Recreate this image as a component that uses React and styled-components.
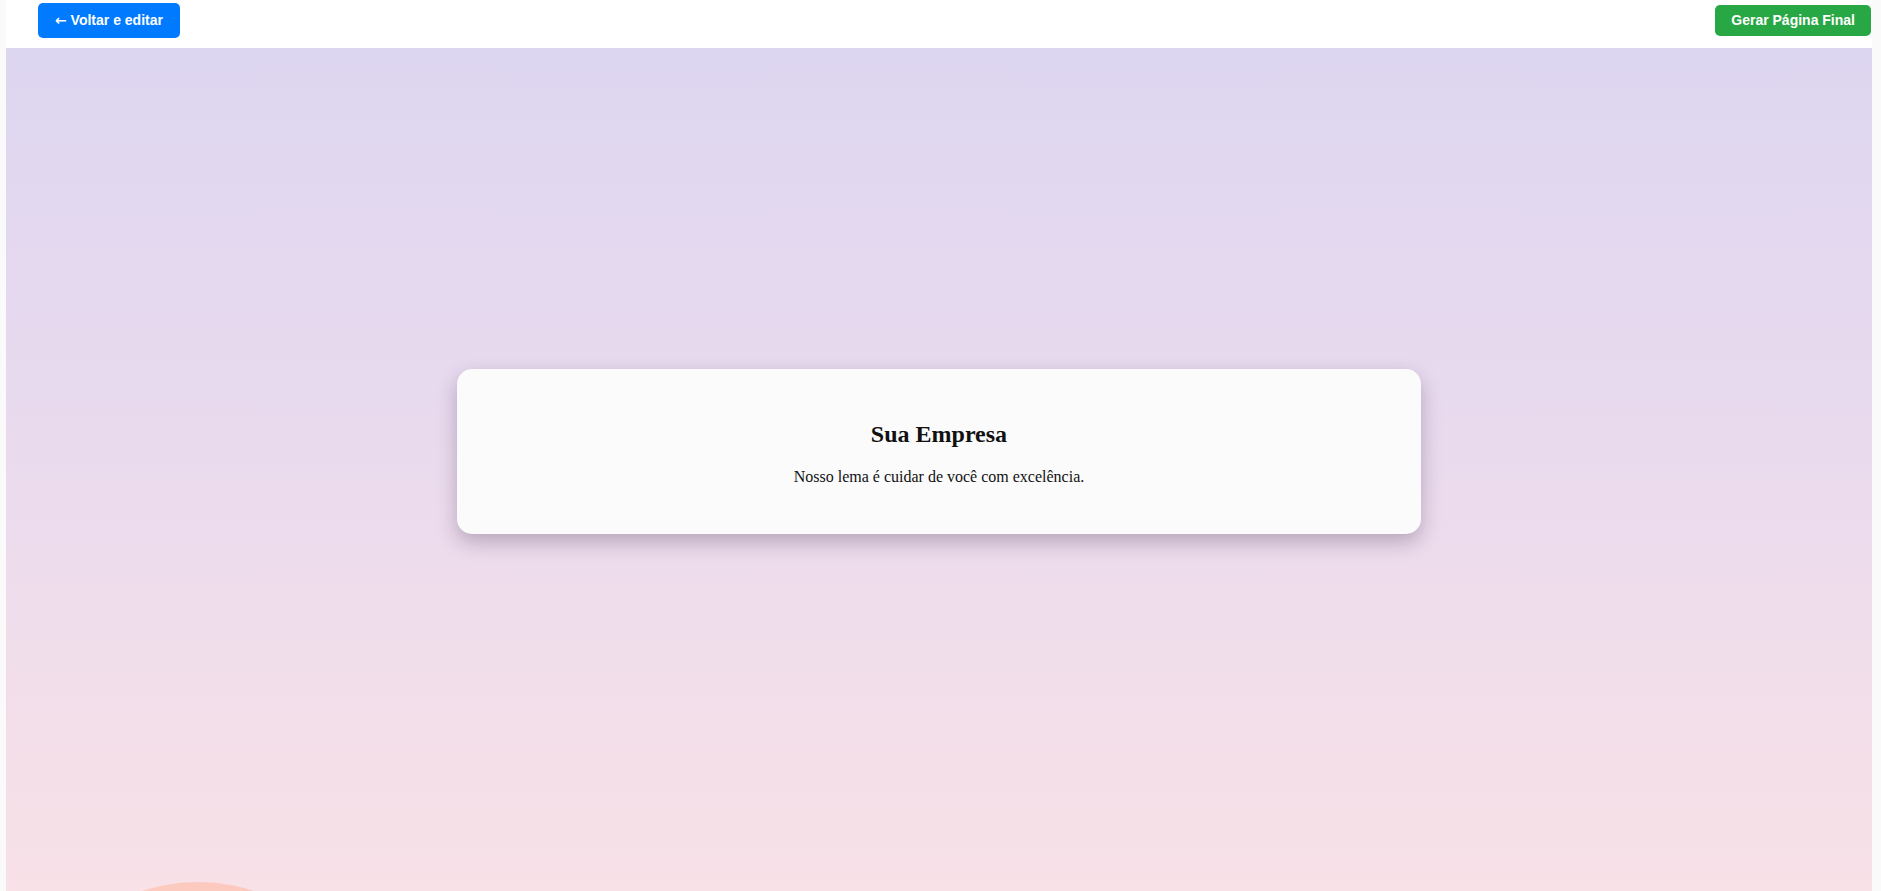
import React from 'react';
import styled, { createGlobalStyle } from 'styled-components';

const GlobalStyle = createGlobalStyle`
  html, body {
    margin: 0;
    padding: 0;
    background: #fafafa;
    overflow: hidden;
  }
`;

const Page = styled.div`
  display: flex;
  flex-direction: column;
  height: 100vh;
  padding: 0 9px 0 6px;
`;

const TopBar = styled.div`
  display: flex;
  justify-content: space-between;
  align-items: flex-start;
  height: 48px;
  background: #ffffff;
  padding: 0 1px 0 32px;
  box-sizing: border-box;
`;

const Button = styled.button`
  border: none;
  border-radius: 5px;
  color: #ffffff;
  font-family: "Liberation Sans", Arial, sans-serif;
  font-size: 14px;
  font-weight: bold;
  line-height: 15px;
  cursor: pointer;
  background: ${(props) => props.color};
  margin-top: ${(props) => props.top}px;
  padding: ${(props) => props.pad};
`;

const Arrow = styled.span`
  font-family: "DejaVu Sans", sans-serif;
  font-weight: bold;
`;

const Preview = styled.div`
  position: relative;
  flex: 1;
  overflow: hidden;
  background: linear-gradient(180deg, #ddd6f0 0%, #e9daee 45%, #f8e1e7 100%);
  display: flex;
  justify-content: center;
  align-items: flex-start;
  padding-top: 321px;
`;

const Blob = styled.div`
  position: absolute;
  top: 834px;
  left: 12px;
  width: 360px;
  height: 360px;
  border-radius: 50%;
  background: linear-gradient(90deg, #fdcdc3, #fcc6ba);
`;

const Card = styled.div`
  position: relative;
  width: 900px;
  padding: 32px;
  background: #fbfbfb;
  border-radius: 15px;
  box-shadow: 0 8px 20px rgba(40, 20, 60, 0.27);
  text-align: center;
  font-family: "Liberation Serif", "Times New Roman", serif;
  color: #111;
`;

const Title = styled.h2`
  font-size: 24px;
  font-weight: bold;
  margin: 0.83em 0;
`;

const Motto = styled.p`
  font-size: 16px;
  margin: 16px 0;
`;

export default function App() {
  return (
    <>
      <GlobalStyle />
      <Page>
        <TopBar>
          <Button color="#007bff" top={3} pad="10px 17px">
            <Arrow>←</Arrow> Voltar e editar
          </Button>
          <Button color="#28a745" top={5} pad="8px 16px">Gerar Página Final</Button>
        </TopBar>
        <Preview>
          <Blob />
          <Card>
            <Title>Sua Empresa</Title>
            <Motto>Nosso lema é cuidar de você com excelência.</Motto>
          </Card>
        </Preview>
      </Page>
    </>
  );
}
